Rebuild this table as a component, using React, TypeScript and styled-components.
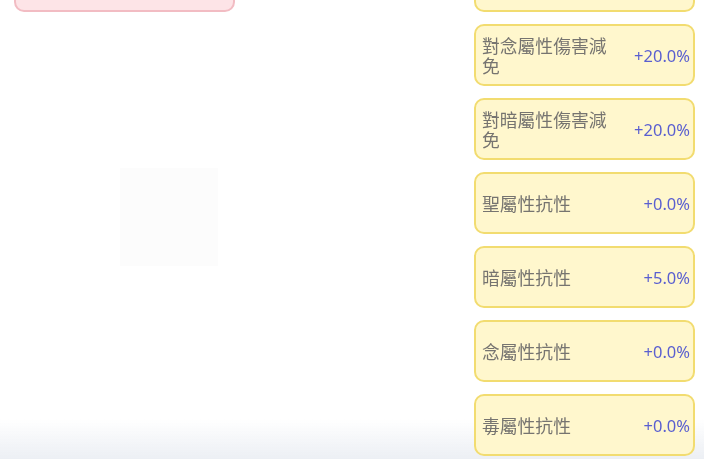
import React from "react";
import styled, { createGlobalStyle } from "styled-components";

const Global = createGlobalStyle`
  html, body { margin: 0; padding: 0; background: #ffffff; overflow: hidden; }
  body { font-family: "Noto Sans CJK TC", "Noto Sans", sans-serif; }
`;

const Page = styled.div`
  display: grid;
  grid-template-columns: 221px 221px;
  justify-content: space-between;
  padding: 0 9px 0 14px;
  margin-top: -50px;
  align-items: start;
  position: relative;
  z-index: 1;
`;

const Column = styled.div`
  display: flex;
  flex-direction: column;
  gap: 12px;
`;

const PinkCard = styled.div`
  box-sizing: border-box;
  height: 62px;
  border-radius: 10px;
  background: #fde4e7;
  border: 2px solid #f2bcc3;
`;

const Placeholder = styled.div`
  width: 98px;
  height: 98px;
  margin-top: 144px;
  margin-left: 106px;
  background: #fcfcfc;
`;

const StatCard = styled.div`
  box-sizing: border-box;
  height: 62px;
  border-radius: 10px;
  background: #fff7cd;
  border: 2px solid #f2dc70;
  display: flex;
  align-items: center;
  justify-content: space-between;
  gap: 10px;
  padding: 0 3px 0 6px;
`;

const Label = styled.div`
  flex: 1;
  min-width: 0;
  font-size: 17.8px;
  line-height: 20px;
  color: #767470;
`;

const Value = styled.div`
  flex-shrink: 0;
  font-family: "Noto Sans", "Liberation Sans", sans-serif;
  font-size: 16.5px;
  color: #5a5fd0;
`;

const BottomFade = styled.div`
  position: fixed;
  left: 0;
  right: 0;
  bottom: 0;
  height: 40px;
  background: linear-gradient(to bottom, rgba(236, 239, 244, 0), #eceff4);
  pointer-events: none;
  z-index: 0;
`;

const stats = [
  { label: "", value: "" },
  { label: "對念屬性傷害減免", value: "+20.0%" },
  { label: "對暗屬性傷害減免", value: "+20.0%" },
  { label: "聖屬性抗性", value: "+0.0%" },
  { label: "暗屬性抗性", value: "+5.0%" },
  { label: "念屬性抗性", value: "+0.0%" },
  { label: "毒屬性抗性", value: "+0.0%" },
  { label: "", value: "" },
];

export default function App() {
  return (
    <>
      <Global />
      <BottomFade />
      <Page>
        <Column>
          <PinkCard />
          <Placeholder />
        </Column>
        <Column>
          {stats.map((s, i) => (
            <StatCard key={i}>
              <Label>{s.label}</Label>
              <Value>{s.value}</Value>
            </StatCard>
          ))}
        </Column>
      </Page>
    </>
  );
}
